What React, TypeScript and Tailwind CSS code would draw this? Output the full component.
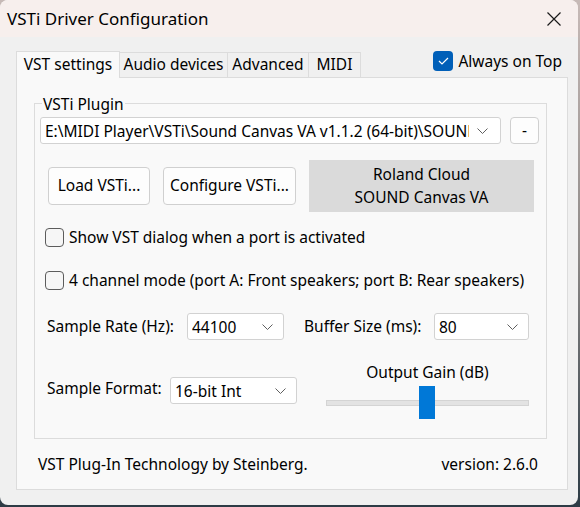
import React from "react";

const font = { fontFamily: '"Noto Sans", "Open Sans", sans-serif' };

function Chevron() {
  return (
    <svg width="11" height="6" viewBox="0 0 11 6" className="shrink-0">
      <path d="M0.5 0.5 L5.5 5.5 L10.5 0.5" fill="none" stroke="#5f5f5f" strokeWidth="1" />
    </svg>
  );
}

function Combo({ value, className }: { value: string; className: string }) {
  return (
    <div
      className={`flex items-center bg-white border border-[#d2d2d2] rounded-[3px] pl-[4px] pr-[10px] h-[27px] ${className}`}
    >
      <span className="flex-1 whitespace-nowrap overflow-hidden text-[15.5px] leading-[20px] mr-[8px]">{value}</span>
      <Chevron />
    </div>
  );
}

function CheckBox({ label }: { label: string }) {
  return (
    <div className="flex items-center gap-[5px]">
      <div className="w-[19px] h-[19px] rounded-[4px] border border-[#5c5c5c] bg-[#f6f6f6]" />
      <span className="text-[15.5px] leading-[20px]">{label}</span>
    </div>
  );
}

function Btn({ label, className }: { label: string; className: string }) {
  return (
    <div
      className={`flex items-center justify-center bg-[#fdfdfd] border border-[#d0d0d0] rounded-[4px] text-[15.5px] ${className}`}
    >
      {label}
    </div>
  );
}

export default function App() {
  return (
    <div
      className="w-[580px] h-[507px] bg-gradient-to-b from-[#c7bab7] via-[#8e8a88] to-[#2d3b45]"
      style={font}
    >
      <div className="w-[578px] h-[505px] rounded-[8px] overflow-hidden bg-[#f0f0f0] flex flex-col text-black">
        {/* title bar */}
        <div className="h-[37px] bg-[#f7efed] flex items-center pl-[7px] pr-[17px] shrink-0">
          <span className="text-[17px] leading-none flex-1 pb-[1px]">VSTi Driver Configuration</span>
          <svg width="14" height="14" viewBox="0 0 14 14">
            <path d="M0.5 0.5 L13.5 13.5 M13.5 0.5 L0.5 13.5" stroke="#1a1a1a" strokeWidth="1.2" />
          </svg>
        </div>

        {/* tabs row */}
        <div className="flex items-end pl-[16px] pr-[16px] mt-[14px] h-[27px] relative z-10">
          <div className="h-[27px] w-[104px] bg-[#f9f9f9] border border-b-0 border-[#dcdcdc] flex items-center justify-center text-[15.5px] leading-none">
            VST settings
          </div>
          <div className="h-[25px] w-[108px] border border-b-0 border-l-0 border-[#dcdcdc] flex items-center justify-center text-[15.5px] leading-none mb-[1px]">
            Audio devices
          </div>
          <div className="h-[25px] w-[81px] border border-b-0 border-l-0 border-[#dcdcdc] flex items-center justify-center text-[15.5px] leading-none mb-[1px]">
            Advanced
          </div>
          <div className="h-[25px] w-[52px] border border-b-0 border-l-0 border-[#dcdcdc] flex items-center justify-center text-[15.5px] leading-none mb-[1px]">
            MIDI
          </div>
          <div className="flex-1" />
          <div className="flex items-center gap-[5px] self-start">
            <div className="w-[20px] h-[20px] rounded-[4px] bg-[#005fb8] flex items-center justify-center">
              <svg width="11" height="8" viewBox="0 0 11 8">
                <path d="M1 4 L4 7 L10 1" fill="none" stroke="white" strokeWidth="1.2" />
              </svg>
            </div>
            <span className="text-[15.5px] leading-[20px]">Always on Top</span>
          </div>
        </div>

        {/* tab page */}
        <div className="ml-[16px] w-[552px] h-[413px] -mt-[1px] border border-[#dcdcdc] bg-[#f9f9f9] flex flex-col px-[17px] pt-[25px]">
          {/* group */}
          <div className="relative border border-[#dcdcdc] w-[513px] h-[336px] flex flex-col px-[5px] pt-[13px]">
            <span className="absolute -top-[10px] left-[7px] px-[1px] bg-[#f9f9f9] text-[15.5px] leading-[20px]">
              VSTi Plugin
            </span>
            <div className="flex items-center gap-[9px]">
              <Combo
                value={"E:\\MIDI Player\\VSTi\\Sound Canvas VA v1.1.2 (64-bit)\\SOUND Canvas VA.dll"}
                className="w-[461px] pr-[12px]"
              />
              <Btn label="-" className="w-[29px] h-[27px]" />
            </div>

            <div className="flex items-center mt-[16px] pl-[8px]">
              <Btn label="Load VSTi..." className="w-[102px] h-[38px]" />
              <Btn label="Configure VSTi..." className="w-[133px] h-[38px] ml-[13px]" />
              <div className="ml-[13px] w-[225px] h-[52px] bg-[#dadada] flex flex-col items-center justify-center text-[15.5px] leading-[23px]">
                <span>Roland Cloud</span>
                <span>SOUND Canvas VA</span>
              </div>
            </div>

            <div className="mt-[15px] pl-[5px]">
              <CheckBox label="Show VST dialog when a port is activated" />
            </div>
            <div className="mt-[23px] pl-[5px]">
              <CheckBox label="4 channel mode (port A: Front speakers; port B: Rear speakers)" />
            </div>

            <div className="flex items-center mt-[23px] pl-[7px]">
              <span className="text-[15.5px] w-[140px]">Sample Rate (Hz):</span>
              <Combo value="44100" className="w-[97px]" />
              <span className="text-[15.5px] ml-[20px] w-[130px]">Buffer Size (ms):</span>
              <Combo value="80" className="w-[95px]" />
            </div>

            <div className="flex items-start mt-[10px] pl-[7px]">
              <span className="text-[15.5px] w-[123px] mt-[27px]">Sample Format:</span>
              <Combo value="16-bit Int" className="w-[127px] mt-[27px]" />
              <div className="ml-[29px] w-[203px] flex flex-col items-center">
                <span className="text-[15.5px] leading-[20px] mt-[12px]">Output Gain (dB)</span>
                <div className="relative w-full h-[34px] mt-[4px] flex items-center">
                  <div className="w-full h-[6px] bg-[#e3e3e3] border border-[#d4d4d4]" />
                  <div className="absolute left-[93px] top-0 w-[16px] h-[33px] bg-[#0078d7]" />
                </div>
              </div>
            </div>
          </div>

          {/* footer */}
          <div className="flex items-center justify-between mt-[14px] pl-[4px] pr-[12px] text-[15.5px]">
            <span>VST Plug-In Technology by Steinberg.</span>
            <span>version: 2.6.0</span>
          </div>
        </div>
      </div>
    </div>
  );
}
